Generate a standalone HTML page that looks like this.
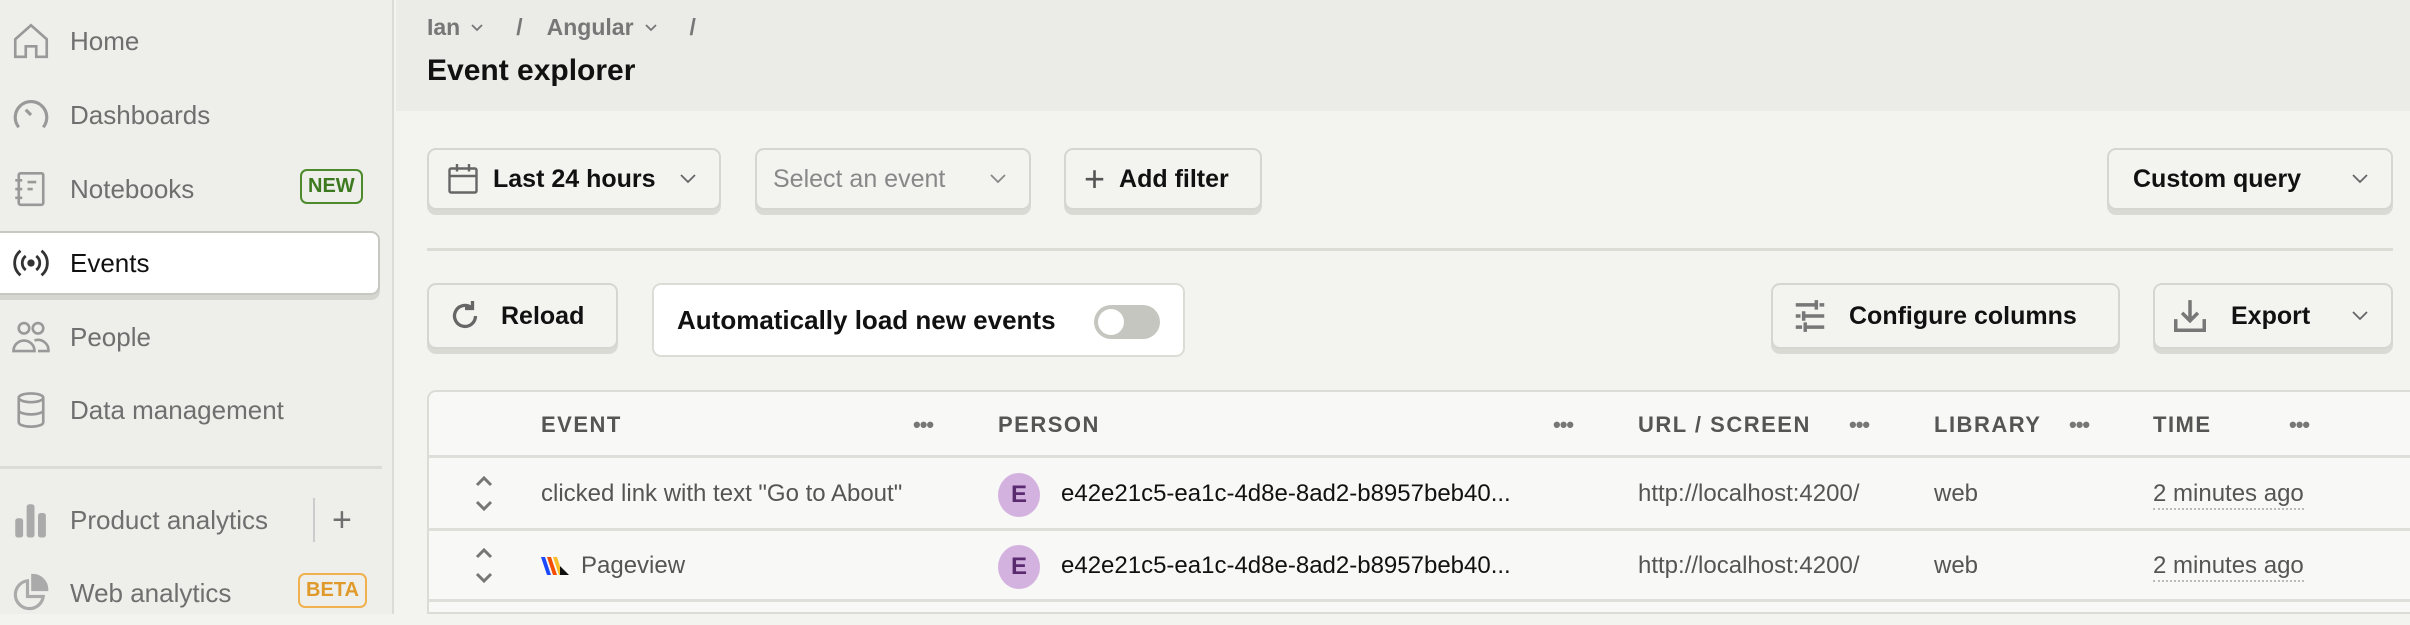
<!DOCTYPE html>
<html><head><meta charset="utf-8"><style>
*{box-sizing:border-box;margin:0;padding:0}
body{width:2410px;height:614px;overflow:hidden;background:#f3f3f0;font-family:"Liberation Sans",sans-serif;position:relative;color:#111}
.abs{position:absolute}
#side{left:0;top:0;width:394px;height:614px;background:#eeeeea;border-right:2px solid #dcdcd6}
.nav{position:absolute;left:0;width:380px;height:64px;display:flex;align-items:center;font-size:26px;color:#6f6f6f}
.nav svg{position:absolute;left:10px;width:42px;height:42px}
.nav span{position:absolute;left:70px}
.badge{position:absolute;font-size:20px;font-weight:bold;border:2px solid;border-radius:7px;padding:4px 6px}
#hdr{left:396px;top:0;right:0;height:111px;background:#ebebe7}
.btn{position:absolute;height:62px;background:#f3f3f0;border:2px solid #d6d6d0;border-radius:9px;box-shadow:0 5px 0 #dadad5;display:flex;align-items:center;font-size:25px;font-weight:bold;color:#111}
.btn svg{flex:none}
.chev{position:absolute;right:22px;top:22px}
.th{position:absolute;top:412px;font-size:22px;font-weight:bold;letter-spacing:1.5px;color:#555}
.dots{position:absolute;top:412px;font-size:22px;color:#777;font-weight:bold;letter-spacing:-1px}
.td{position:absolute;font-size:24px;color:#555}
.hl{position:absolute;left:429px;width:1981px;height:3px;background:#dfdfd9}
</style></head><body>
<div id="side" class="abs">
 <div class="nav" style="top:9px"><svg viewBox="0 0 24 24" fill="none" stroke="#999" stroke-width="1.5"><path d="M3 11 L12 3 L21 11 V21 H15 V15 H9 V21 H3 Z"/></svg><span>Home</span></div>
 <div class="nav" style="top:83px"><svg viewBox="0 0 24 24" fill="none" stroke="#999" stroke-width="1.8"><path d="M5 19 A9 9 0 1 1 19 19"/><path d="M9 9 L12 12"/></svg><span>Dashboards</span></div>
 <div class="nav" style="top:157px"><svg viewBox="0 0 24 24" fill="none" stroke="#999" stroke-width="1.5"><rect x="5" y="3" width="14" height="18" rx="1"/><path d="M3 7h4M3 12h4M3 17h4M10 8h5M10 12h3"/></svg><span>Notebooks</span><div class="badge" style="left:300px;top:12px;color:#3d7a1f;border-color:#4c8a2b">NEW</div></div>
 <div class="nav" style="top:231px;background:#fff;border:2px solid #c8c8c2;border-left:none;border-radius:0 9px 9px 0;box-shadow:0 5px 0 #d6d6d0;color:#111"><svg viewBox="0 0 24 24" fill="none" stroke="#333" stroke-width="1.6"><path d="M6 5 A9 9 0 0 0 6 19M18 5 A9 9 0 0 1 18 19M9 8 A5 5 0 0 0 9 16M15 8 A5 5 0 0 1 15 16"/><circle cx="12" cy="12" r="1.3" fill="#333"/></svg><span>Events</span></div>
 <div class="nav" style="top:305px"><svg viewBox="0 0 24 24" fill="none" stroke="#999" stroke-width="1.5"><circle cx="8" cy="7" r="3"/><circle cx="16" cy="7" r="3"/><path d="M2 20 A6 6 0 0 1 14 20 Z M14 14 A6 6 0 0 1 22 20 H16"/></svg><span>People</span></div>
 <div class="nav" style="top:378px"><svg viewBox="0 0 24 24" fill="none" stroke="#999" stroke-width="1.5"><ellipse cx="12" cy="5" rx="7" ry="2.5"/><path d="M5 5v14c0 1.5 3 2.5 7 2.5s7-1 7-2.5V5M5 12c0 1.5 3 2.5 7 2.5s7-1 7-2.5"/></svg><span>Data management</span></div>
 <div class="abs" style="left:0;top:466px;width:382px;height:3px;background:#dcdcd6"></div>
 <div class="nav" style="top:488px"><svg viewBox="0 0 24 24" fill="#aaa"><rect x="3" y="11" width="4.5" height="11" rx="1.5"/><rect x="9.5" y="3" width="4.5" height="19" rx="1.5"/><rect x="16" y="8" width="4.5" height="14" rx="1.5"/></svg><span>Product analytics</span><div class="abs" style="left:313px;top:10px;width:2px;height:44px;background:#ccc"></div><span style="left:332px;font-size:34px">+</span></div>
 <div class="nav" style="top:561px"><svg viewBox="0 0 24 24" fill="none" stroke="#aaa" stroke-width="1.8"><path d="M10 5 A8 8 0 1 0 19 14 H10 Z"/><path d="M13 2 A8 8 0 0 1 21 10 H13 Z" fill="#aaa"/></svg><span>Web analytics</span><div class="badge" style="left:298px;top:12px;color:#e09a2c;border-color:#f0b14f">BETA</div></div>
</div>
<div id="hdr" class="abs"></div>
<div class="abs" style="left:427px;top:14px;font-size:23px;color:#777;font-weight:bold;display:flex;align-items:center;gap:10px">Ian <svg width="14" height="10" viewBox="0 0 14 10" fill="none" stroke="#777" stroke-width="1.8"><path d="M2 2l5 5 5-5"/></svg><span style="margin-left:22px">/</span><span style="margin-left:14px">Angular</span><svg width="14" height="10" viewBox="0 0 14 10" fill="none" stroke="#777" stroke-width="1.8"><path d="M2 2l5 5 5-5"/></svg><span style="margin-left:22px">/</span></div>
<div class="abs" style="left:427px;top:54px;font-size:30px;font-weight:bold">Event explorer</div>

<div class="btn" style="left:427px;top:148px;width:294px"><svg style="margin-left:16px" width="36" height="36" viewBox="0 0 24 24" fill="none" stroke="#666" stroke-width="1.6"><rect x="3" y="5" width="18" height="16" rx="1"/><path d="M3 10h18M8 2v5M16 2v5"/></svg><span style="margin-left:12px">Last 24 hours</span><svg class="chev" width="18" height="14" viewBox="0 0 18 14" fill="none" stroke="#666" stroke-width="1.8"><path d="M2 3l7 7 7-7"/></svg></div>
<div class="btn" style="left:755px;top:148px;width:276px;color:#888;font-weight:normal"><span style="margin-left:16px">Select an event</span><svg class="chev" width="18" height="14" viewBox="0 0 18 14" fill="none" stroke="#888" stroke-width="1.8"><path d="M2 3l7 7 7-7"/></svg></div>
<div class="btn" style="left:1064px;top:148px;width:198px"><span style="margin-left:18px;font-size:36px;font-weight:normal;color:#555">+</span><span style="margin-left:14px">Add filter</span></div>
<div class="btn" style="left:2107px;top:148px;width:286px"><span style="margin-left:24px">Custom query</span><svg class="chev" width="18" height="14" viewBox="0 0 18 14" fill="none" stroke="#666" stroke-width="1.8"><path d="M2 3l7 7 7-7"/></svg></div>
<div class="abs" style="left:427px;top:248px;width:1966px;height:3px;background:#dcdcd6"></div>

<div class="btn" style="left:427px;top:283px;width:191px;height:66px"><svg style="margin-left:18px" width="36" height="36" viewBox="0 0 24 24" fill="none" stroke="#666" stroke-width="2.2"><path d="M19 12 A7 7 0 1 1 16 6.2"/><path d="M17 2v5h-5" stroke-linejoin="miter"/></svg><span style="margin-left:18px">Reload</span></div>
<div class="abs" style="left:652px;top:283px;width:533px;height:74px;background:#fff;border:2px solid #dcdcd6;border-radius:9px;font-size:26px;font-weight:bold;display:flex;align-items:center"><span style="margin-left:23px">Automatically load new events</span><div class="abs" style="left:440px;top:20px;width:66px;height:34px;border-radius:17px;background:#c6c6c0"><div class="abs" style="left:4px;top:4px;width:26px;height:26px;border-radius:50%;background:#fff"></div></div></div>
<div class="btn" style="left:1771px;top:283px;width:349px;height:66px"><svg style="margin-left:18px" width="38" height="38" viewBox="0 0 24 24" fill="none" stroke="#777" stroke-width="2.2"><path d="M3 5h12M18 5h3M16 2v6M3 12h3M9 12h12M8 9v6M3 19h4M10 19h11M9 16v6"/></svg><span style="margin-left:20px">Configure columns</span></div>
<div class="btn" style="left:2153px;top:283px;width:240px;height:66px"><svg style="margin-left:16px" width="38" height="38" viewBox="0 0 24 24" fill="none" stroke="#777" stroke-width="2.2"><path d="M3 14v7h18v-7M12 2v13M7 10l5 5 5-5"/></svg><span style="margin-left:22px">Export</span><svg class="chev" style="top:24px" width="18" height="14" viewBox="0 0 18 14" fill="none" stroke="#666" stroke-width="1.8"><path d="M2 3l7 7 7-7"/></svg></div>

<div class="abs" style="left:427px;top:390px;width:1983px;height:224px;background:#f8f8f6;border:2px solid #dcdcd6;border-right:none;border-radius:9px 0 0 0"></div>
<div class="hl" style="top:455px"></div><div class="hl" style="top:528px"></div><div class="hl" style="top:599px"></div>
<div class="th" style="left:541px">EVENT</div><div class="dots" style="left:913px">•••</div>
<div class="th" style="left:998px">PERSON</div><div class="dots" style="left:1553px">•••</div>
<div class="th" style="left:1638px">URL / SCREEN</div><div class="dots" style="left:1849px">•••</div>
<div class="th" style="left:1934px">LIBRARY</div><div class="dots" style="left:2069px">•••</div>
<div class="th" style="left:2153px">TIME</div><div class="dots" style="left:2289px">•••</div>

<svg class="abs" style="left:472px;top:474px" width="24" height="40" viewBox="0 0 24 40" fill="none" stroke="#777" stroke-width="3"><path d="M5 11l7-7 7 7M5 28l7 7 7-7"/></svg>
<svg class="abs" style="left:472px;top:546px" width="24" height="40" viewBox="0 0 24 40" fill="none" stroke="#777" stroke-width="3"><path d="M5 11l7-7 7 7M5 28l7 7 7-7"/></svg>
<div class="td" style="left:541px;top:480px">clicked link with text "Go to About"</div>
<svg class="abs" style="left:541px;top:557px" width="30" height="18" viewBox="0 0 30 18"><path d="M0 0l4 0 6 18h-4z" fill="#1d4aff"/><path d="M6 0l4 0 6 18h-4z" fill="#f54e00"/><path d="M12 0l4 0 6 18h-4z" fill="#f9bd2b"/><path d="M19 9l9 9h-9z" fill="#111"/></svg>
<div class="td" style="left:581px;top:552px">Pageview</div>
<div class="abs" style="left:998px;top:473px;width:42px;height:44px;border-radius:50%;background:#d4b2e0;color:#5a2a6e;font-size:24px;font-weight:bold;text-align:center;line-height:44px">E</div>
<div class="abs" style="left:998px;top:545px;width:42px;height:44px;border-radius:50%;background:#d4b2e0;color:#5a2a6e;font-size:24px;font-weight:bold;text-align:center;line-height:44px">E</div>
<div class="td" style="left:1061px;top:480px;color:#111">e42e21c5-ea1c-4d8e-8ad2-b8957beb40...</div>
<div class="td" style="left:1061px;top:552px;color:#111">e42e21c5-ea1c-4d8e-8ad2-b8957beb40...</div>
<div class="td" style="left:1638px;top:480px">http://localhost:4200/</div>
<div class="td" style="left:1638px;top:552px">http://localhost:4200/</div>
<div class="td" style="left:1934px;top:480px">web</div><div class="td" style="left:1934px;top:552px">web</div>
<div class="td" style="left:2153px;top:480px;border-bottom:2px dotted #bbb">2 minutes ago</div>
<div class="td" style="left:2153px;top:552px;border-bottom:2px dotted #bbb">2 minutes ago</div>
</body></html>
